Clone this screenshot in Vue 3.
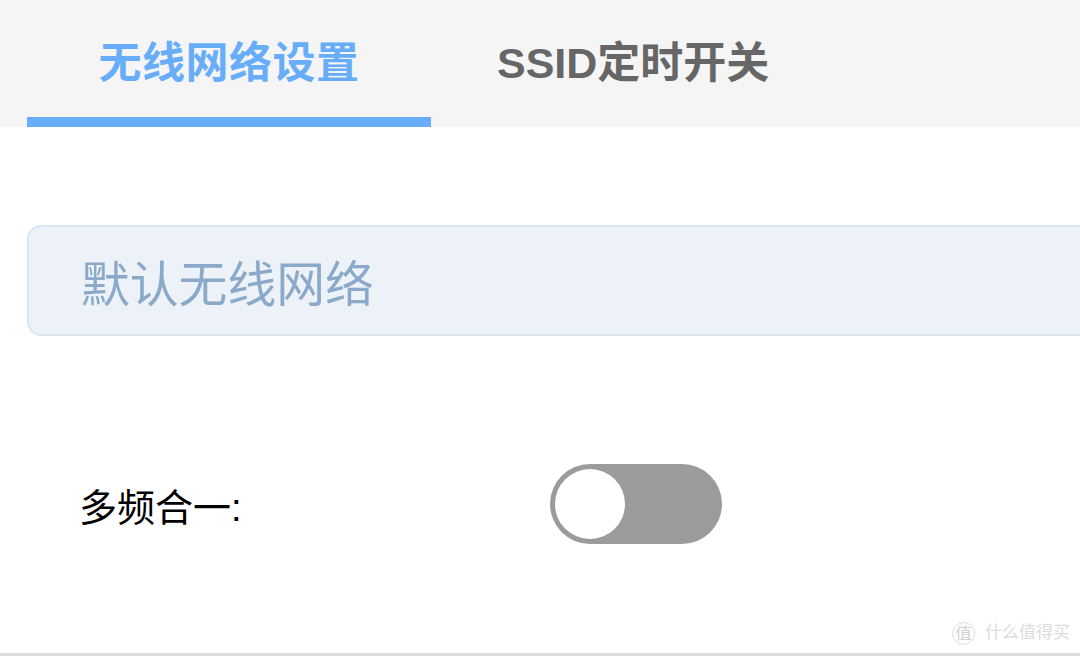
<template>
  <div class="page">
    <div class="tabs">
      <div class="tab active">无线网络设置</div>
      <div class="tab">SSID定时开关</div>
    </div>

    <div class="content">
      <div class="banner">默认无线网络</div>

      <div class="row">
        <span class="label">多频合一:</span>
        <div class="switch"><div class="knob"></div></div>
      </div>

      <div class="divider"></div>
    </div>

    <div class="mark">
      <span class="mark-icon">值</span>
      <span>什么值得买</span>
    </div>
  </div>
</template>

<script setup>
</script>

<style>
html, body {
  margin: 0;
  background: #fff;
  overflow: hidden;
}
</style>

<style scoped>
.page {
  position: relative;
  width: 1080px;
  height: 656px;
  overflow: hidden;
  background: #fff;
  font-family: "Liberation Sans", "Noto Sans CJK SC", sans-serif;
}

.tabs {
  display: flex;
  height: 127px;
  padding-left: 27px;
  box-sizing: border-box;
  background: #f5f5f5;
}

.tab {
  height: 127px;
  box-sizing: border-box;
  padding-top: 33px;
  font-size: 43px;
  line-height: 60px;
  font-weight: bold;
  color: #666;
}

.tab.active {
  width: 404px;
  margin-right: 66px;
  text-align: center;
  letter-spacing: 0.5px;
  color: #68adf9;
  border-bottom: 10px solid #68adf9;
}

.content {
  padding: 98px 0 0 27px;
}

.banner {
  height: 111px;
  box-sizing: border-box;
  margin-right: -20px;
  padding-left: 52px;
  background: #edf2f9;
  border: 2px solid #dbe6f3;
  border-radius: 14px;
  font-size: 48.8px;
  line-height: 117px;
  color: #8ba9c9;
}

.row {
  display: flex;
  align-items: center;
  height: 80px;
  margin-top: 128px;
  padding-left: 52px;
}

.label {
  width: 471px;
  font-size: 38px;
  color: #000;
}

.switch {
  width: 172px;
  height: 80px;
  box-sizing: border-box;
  padding: 5px;
  border-radius: 40px;
  background: #9b9b9b;
}

.knob {
  width: 70px;
  height: 70px;
  border-radius: 50%;
  background: #fff;
}

.divider {
  height: 3px;
  margin: 109px 0 0 -27px;
  background: #dcdcdc;
}

.mark {
  position: absolute;
  right: 10px;
  top: 621px;
  display: flex;
  align-items: center;
  gap: 10px;
  font-size: 17px;
  line-height: 24px;
  color: #dcdcdc;
}

.mark-icon {
  width: 23px;
  height: 23px;
  box-sizing: border-box;
  border: 1px solid #dcdcdc;
  border-radius: 50%;
  font-size: 16px;
  line-height: 21px;
  text-align: center;
  color: #cfcfcf;
}
</style>
